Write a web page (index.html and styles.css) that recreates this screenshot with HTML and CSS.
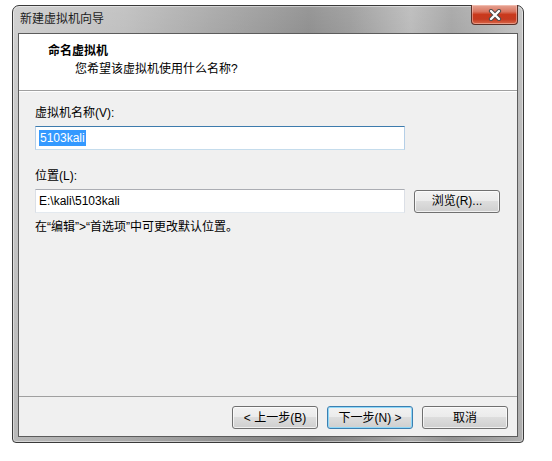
FILE: index.html
```html
<!DOCTYPE html>
<html lang="zh-CN">
<head>
<meta charset="utf-8">
<title>新建虚拟机向导</title>
<link rel="stylesheet" href="styles.css">
</head>
<body>
<div class="window">
  <div class="titlebar">新建虚拟机向导</div>
  <div class="close-btn">
    <svg width="14" height="12" viewBox="0 0 14 12">
      <path d="M3 2 L11 10 M11 2 L3 10" stroke="#4a4a4a" stroke-width="4.2" stroke-linecap="round"/>
      <path d="M3 2 L11 10 M11 2 L3 10" stroke="#ffffff" stroke-width="2.4" stroke-linecap="round"/>
    </svg>
  </div>
  <div class="client">
    <div class="header">
      <div class="header-title">命名虚拟机</div>
      <div class="header-sub">您希望该虚拟机使用什么名称?</div>
    </div>
    <div class="body">
      <div class="label">虚拟机名称(V):</div>
      <div class="textbox focused"><span class="selected">5103kali</span></div>
      <div class="label label-gap">位置(L):</div>
      <div class="row">
        <div class="textbox">E:\kali\5103kali</div>
        <div class="button browse">浏览(R)...</div>
      </div>
      <div class="note">在“编辑”&gt;“首选项”中可更改默认位置。</div>
    </div>
    <div class="footer">
      <div class="button">&lt; 上一步(B)</div>
      <div class="button default">下一步(N) &gt;</div>
      <div class="button">取消</div>
    </div>
  </div>
</div>
</body>
</html>
```
FILE: styles.css
```css
html, body {
  margin: 0;
  padding: 0;
  background: #ffffff;
}

body {
  font-family: "Liberation Sans", "Noto Sans CJK SC", sans-serif;
  font-size: 12px;
  color: #000000;
}

.window {
  position: relative;
  box-sizing: border-box;
  margin: 5px 0 0 12px;
  width: 512px;
  height: 438px;
  border: 1px solid #3a3a3a;
  border-radius: 7px 7px 4px 4px;
  padding: 0 5px 5px 5px;
  display: flex;
  flex-direction: column;
  background:
    linear-gradient(to bottom, rgba(255,255,255,0.10) 0%, rgba(0,0,0,0) 10%, rgba(0,0,0,0.10) 100%),
    linear-gradient(to right, #cdcdcd 0%, #bdbdbd 22%, #a4a4a4 40%, #8c8c8c 58%, #999999 66%, #b9b9b9 78%, #a3a3a3 86%, #b0b0b0 93%, #c2c2c2 100%);
  box-shadow: inset 0 0 0 1px rgba(255,255,255,0.45);
}

.titlebar {
  height: 27px;
  line-height: 26px;
  padding-left: 2px;
  color: #1c1c1c;
  font-size: 12px;
  flex: none;
}

.close-btn {
  position: absolute;
  top: -1px;
  right: 5px;
  width: 47px;
  height: 20px;
  box-sizing: border-box;
  border: 1px solid #5a3028;
  border-top: none;
  border-radius: 0 0 4px 4px;
  background: linear-gradient(to bottom, #e6a595 0%, #d9745f 35%, #c9391c 50%, #c53a20 75%, #d9684a 100%);
  box-shadow: inset 0 0 0 1px rgba(255,220,210,0.45);
  display: flex;
  align-items: center;
  justify-content: center;
}

.client {
  flex: 1;
  display: flex;
  flex-direction: column;
  border: 1px solid #5c5c5c;
  background: #f0f0f0;
  min-height: 0;
}

.header {
  height: 57px;
  box-sizing: border-box;
  background: #ffffff;
  border-bottom: 1px solid #a0a0a0;
  padding-top: 9px;
  flex: none;
}

.header-title {
  font-weight: bold;
  padding-left: 29px;
  line-height: 16px;
  font-size: 12px;
}

.header-sub {
  padding-left: 56px;
  margin-top: 2px;
  line-height: 16px;
}

.body {
  flex: 1;
  padding: 14px 0 0 16px;
  box-shadow: inset 0 1px 0 #ffffff;
}

.label {
  line-height: 16px;
  height: 16px;
}

.label-gap {
  margin-top: 18px;
}

.textbox {
  margin-top: 5px;
  box-sizing: border-box;
  width: 370px;
  height: 24px;
  background: #ffffff;
  border: 1px solid #dbdfe6;
  border-top-color: #abadb3;
  border-bottom-color: #e3e9ef;
  padding-left: 3px;
  line-height: 22px;
  font-family: "Liberation Sans", "Noto Sans CJK SC", sans-serif;
}

.textbox.focused {
  border-color: #c5dcec;
  border-top-color: #3d7bad;
  border-left-color: #b5cfe7;
  border-right-color: #b5cfe7;
}

.selected {
  background: #3399ff;
  color: #ffffff;
  padding: 1px 1px;
}

.row {
  display: flex;
  align-items: center;
  gap: 9px;
  margin-top: 5px;
}

.row .textbox {
  margin-top: 0;
}

.note {
  margin-top: 6px;
  line-height: 16px;
}

.button {
  box-sizing: border-box;
  width: 86px;
  height: 23px;
  border: 1px solid #707070;
  border-radius: 3px;
  background: linear-gradient(to bottom, #f2f2f2 0%, #ebebeb 48%, #dddddd 50%, #cfcfcf 100%);
  box-shadow: inset 0 0 0 1px rgba(255,255,255,0.7);
  display: flex;
  align-items: center;
  justify-content: center;
  line-height: 16px;
  color: #000000;
}

.browse {
  width: 86px;
}

.button.default {
  border-color: #3c7fb1;
  box-shadow: inset 0 0 0 1px #8fd8f8;
  background: linear-gradient(to bottom, #eaf6fd 0%, #d9f0fc 48%, #bee6fd 50%, #a7d9f5 100%);
  background: linear-gradient(to bottom, #f2f2f2 0%, #ebebeb 48%, #dddddd 50%, #cfcfcf 100%);
}

.footer {
  flex: none;
  height: 40px;
  box-sizing: border-box;
  border-top: 1px solid #a0a0a0;
  padding: 9px 9px 0 0;
  display: flex;
  justify-content: flex-end;
  gap: 9px;
}
```
